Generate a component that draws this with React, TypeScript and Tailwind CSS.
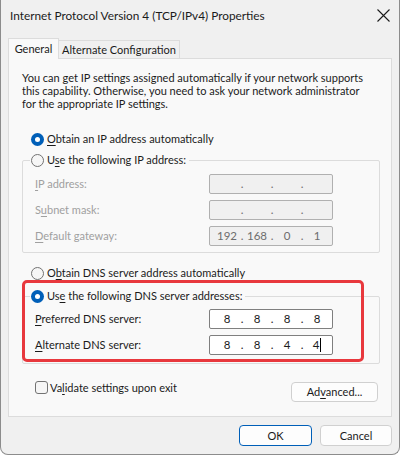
import type { ReactNode } from "react";

function Radio({ checked }: { checked?: boolean }) {
  if (checked) {
    return (
      <span className="flex h-[13px] w-[13px] shrink-0 items-center justify-center rounded-full bg-[#005fb8]">
        <span className="h-[5px] w-[5px] rounded-full bg-white" />
      </span>
    );
  }
  return <span className="h-[13px] w-[13px] shrink-0 rounded-full border border-[#737373] bg-[#f6f6f6]" />;
}

function U({ children }: { children: ReactNode }) {
  return <span className="underline underline-offset-[2px] decoration-1">{children}</span>;
}

function RadioRow({ checked, children }: { checked?: boolean; children: ReactNode }) {
  return (
    <div className="flex h-[20px] items-center gap-[3px] pl-[1px]">
      <Radio checked={checked} />
      <span className="whitespace-nowrap">{children}</span>
    </div>
  );
}

function IpField({ parts, enabled, caret }: { parts: string[]; enabled?: boolean; caret?: boolean }) {
  const box = enabled
    ? "bg-white border-[#7f7f7f] text-[#1b1b1b]"
    : "bg-[#f0f0f0] border-[#b0b0b0] text-[#6d6d6d]";
  return (
    <div className={`flex h-[20px] w-[124px] items-center rounded-[2px] border pl-[5px] text-[11.5px] ${box}`}>
      {parts.map((p, i) => (
        <div key={i} className="flex items-center">
          {i > 0 && <span className="w-[6px] text-center">.</span>}
          <span className="flex w-[24px] items-center justify-center">
            {p}
            {caret && i === 3 && <span className="ml-[1px] h-[14px] w-px bg-black" />}
          </span>
        </div>
      ))}
    </div>
  );
}

function FieldRow({ label, children, disabled }: { label: ReactNode; children: ReactNode; disabled?: boolean }) {
  return (
    <div className="flex h-[20px] items-center">
      <span className={`w-[174px] whitespace-nowrap ${disabled ? "text-[#a0a0a0]" : ""}`}>{label}</span>
      {children}
    </div>
  );
}

export default function App() {
  return (
    <div className="flex h-[455px] w-[400px] flex-col overflow-hidden rounded-b-[8px] border-x border-b border-[#8c8c8c] bg-[#f0f0f0] font-['Lato',sans-serif] text-[11px] leading-[16px] text-[#1b1b1b]">
      {/* title bar */}
      <div className="flex h-[31px] items-center justify-between pl-[9px] pr-[9px]">
        <span className="whitespace-nowrap text-[11.8px]">Internet Protocol Version 4 (TCP/IPv4) Properties</span>
        <svg width="13" height="13" viewBox="0 0 13 13" fill="none" stroke="#1b1b1b" strokeWidth="1.1">
          <path d="M0.5 0.5 L12.5 12.5 M12.5 0.5 L0.5 12.5" />
        </svg>
      </div>

      {/* tabs */}
      <div className="mt-[7px] flex h-[20px] items-end pl-[7px]">
        <div className="relative z-10 -mb-px flex h-[21px] w-[51px] items-center justify-center whitespace-nowrap border-x border-t border-[#dcdcdc] bg-[#f9f9f9]">
          General
        </div>
        <div className="-ml-px flex h-[18px] w-[122px] items-center justify-center whitespace-nowrap border-x border-t border-[#dcdcdc] bg-[#f0f0f0] pt-[1px]">
          Alternate Configuration
        </div>
      </div>

      {/* panel */}
      <div className="relative mx-[7px] h-[359px] border border-[#dcdcdc] bg-[#f9f9f9] pl-[13px] pr-[11px] pt-[12px]">
        <p className="whitespace-nowrap leading-[13px]">
          You can get IP settings assigned automatically if your network supports
          <br />
          this capability. Otherwise, you need to ask your network administrator
          <br />
          for the appropriate IP settings.
        </p>

        <div className="mt-[19px] pl-[8px]">
          <RadioRow checked>
            <U>O</U>btain an IP address automatically
          </RadioRow>
        </div>

        <fieldset className="mt-[1px] rounded-[2px] border border-[#dcdcdc] p-0 pb-[6px] pl-[12px] pt-[4px]">
          <legend className="ml-[-5px] p-0 pr-[3px]">
            <RadioRow>
              U<U>s</U>e the following IP address:
            </RadioRow>
          </legend>
          <div className="flex flex-col gap-[6px]">
            <FieldRow disabled label={<><U>I</U>P address:</>}>
              <IpField parts={["", "", "", ""]} />
            </FieldRow>
            <FieldRow disabled label={<>S<U>u</U>bnet mask:</>}>
              <IpField parts={["", "", "", ""]} />
            </FieldRow>
            <FieldRow disabled label={<><U>D</U>efault gateway:</>}>
              <IpField parts={["192", "168", "0", "1"]} />
            </FieldRow>
          </div>
        </fieldset>

        <div className="mt-[10px] pl-[8px]">
          <RadioRow>
            O<U>b</U>tain DNS server address automatically
          </RadioRow>
        </div>

        <fieldset className="mt-[3px] rounded-[2px] border border-[#dcdcdc] p-0 pb-[8px] pl-[12px] pt-[3px]">
          <legend className="ml-[-5px] p-0 pr-[3px]">
            <RadioRow checked>
              Us<U>e</U> the following DNS server addresses:
            </RadioRow>
          </legend>
          <div className="flex flex-col gap-[6px]">
            <FieldRow label={<><U>P</U>referred DNS server:</>}>
              <IpField enabled parts={["8", "8", "8", "8"]} />
            </FieldRow>
            <FieldRow label={<><U>A</U>lternate DNS server:</>}>
              <IpField enabled caret parts={["8", "8", "4", "4"]} />
            </FieldRow>
          </div>
        </fieldset>

        <div className="mt-[17px] flex items-start justify-between pr-[2px]">
          <label className="flex h-[13px] items-center gap-[2px] pl-[13px]">
            <span className="h-[13px] w-[13px] rounded-[3px] border border-[#737373] bg-[#f6f6f6]" />
            <span className="whitespace-nowrap">
              Va<U>l</U>idate settings upon exit
            </span>
          </label>
          <button className="mt-[1px] flex h-[20px] w-[87px] items-center justify-center rounded-[4px] border border-[#d0d0d0] bg-[#fdfdfd]">
            Ad<U>v</U>anced...
          </button>
        </div>

        {/* annotation */}
        <div className="pointer-events-none absolute left-[13px] top-[221px] h-[82px] w-[342px] rounded-[5px] border-[3px] border-[#e8383d]" />
      </div>

      {/* buttons */}
      <div className="mt-[8px] flex justify-end gap-[8px] pr-[7px]">
        <button className="flex h-[21px] w-[73px] items-center justify-center rounded-[4px] border border-[#005fb8] bg-[#fdfdfd]">
          OK
        </button>
        <button className="flex h-[21px] w-[72px] items-center justify-center rounded-[4px] border border-[#d0d0d0] bg-[#fdfdfd]">
          Cancel
        </button>
      </div>
    </div>
  );
}
